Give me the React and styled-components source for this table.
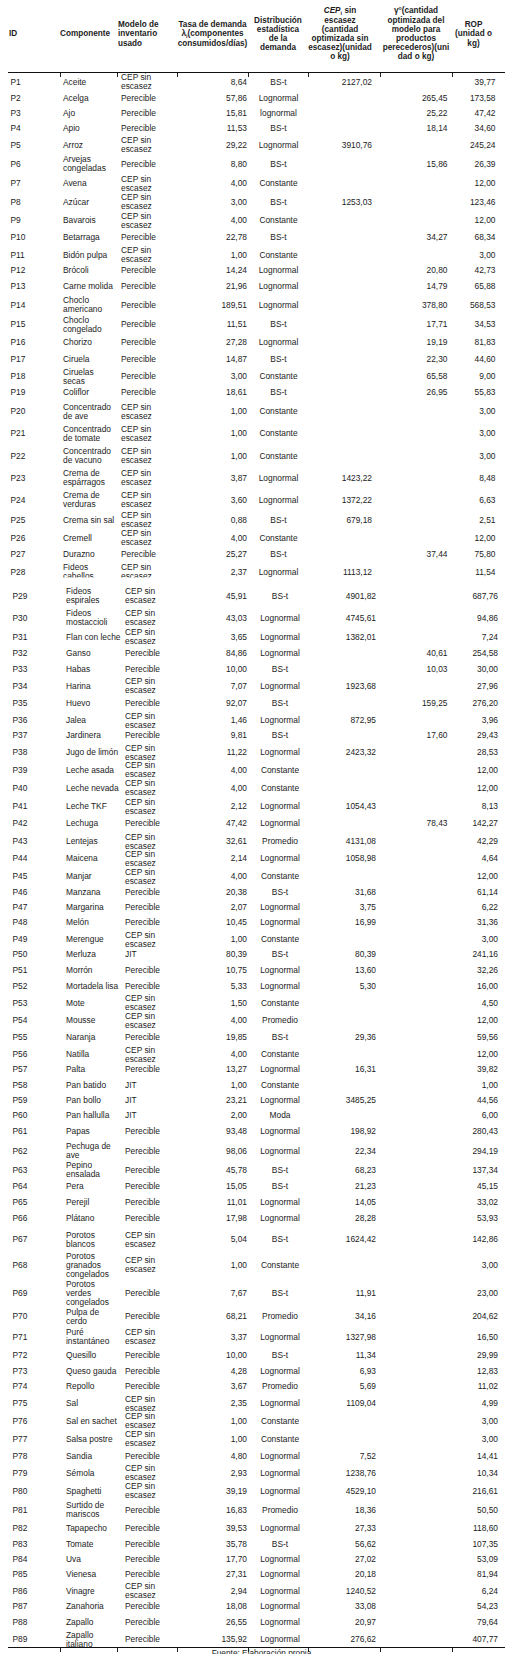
import React from 'react'
import styled, { createGlobalStyle } from 'styled-components'

const GlobalStyle = createGlobalStyle`
  body {
    margin: 0;
    background: #fff;
  }
`

const COLS = '52px 57px 60px 71px 60px 72px 72px 53px'

const Page = styled.div`
  width: 497px;
  padding-left: 8px;
  font-family: 'Liberation Sans', Arial, sans-serif;
  color: #1c1c1c;
`

const Header = styled.div`
  display: grid;
  grid-template-columns: ${COLS};
  align-items: center;
  box-sizing: border-box;
  height: 72px;
  padding-bottom: 4px;
  font-size: 8.2px;
  font-weight: bold;
  line-height: 9.2px;
`

const HeadCell = styled.div`
  text-align: ${p => p.$align || 'center'};
  padding-left: ${p => p.$pl || 0}px;
  padding-right: ${p => p.$pr || 0}px;
`

const Line = styled.span`
  display: block;
  white-space: nowrap;
`

const Sub = styled.sub`
  font-size: 5.5px;
  line-height: 0;
  vertical-align: -1.5px;
`

const Rule = styled.div`
  display: grid;
  grid-template-columns: ${COLS};
  border-top: 1.5px solid #111;
  margin-bottom: ${p => p.$overlap ? -4 : 0}px;
`

const Tick = styled.span`
  height: 4px;
  border-left: ${p => p.$first ? 'none' : '1px solid #222'};
`

const Row = styled.div`
  display: grid;
  grid-template-columns: ${COLS};
  align-items: center;
  height: ${p => p.$h}px;
  font-size: 8.4px;
  line-height: 9px;
  ${p => p.$clip && 'clip-path: inset(0 0 4px 0);'}
`

const PageBreak = styled.div`
  height: ${p => p.$h}px;
`

const IdCell = styled.div`
  padding-left: ${p => p.$p2 ? 4.5 : 2.5}px;
  white-space: nowrap;
`

const NameCell = styled.div`
  padding-left: ${p => p.$p2 ? 6 : 3}px;
`

const ModelCell = styled.div`
  padding-left: ${p => p.$p2 ? 8 : 4}px;
`

const DistCell = styled.div`
  text-align: center;
  white-space: nowrap;
  padding-left: ${p => p.$p2 ? 4 : 1}px;
`

const NumCell = styled.div`
  text-align: right;
  white-space: nowrap;
  padding-right: ${p => p.$pr}px;
`

const Source = styled.div`
  height: 5px;
  margin-top: -3px;
  overflow: hidden;
  padding-left: 10px;
  text-align: center;
  font-size: 8.3px;
  line-height: 9px;
`

const MODELS = { C: 'CEP sin/escasez', P: 'Perecible', J: 'JIT' }

// id;componente;modelo;tasa;distribucion;cep;gamma;rop;y (centro de la fila)
const RAW = `
P1;Aceite;C;8,64;BS-t;2127,02;;39,77;82.3
P2;Acelga;P;57,86;Lognormal;;265,45;173,58;99
P3;Ajo;P;15,81;lognormal;;25,22;47,42;114
P4;Apio;P;11,53;BS-t;;18,14;34,60;129
P5;Arroz;C;29,22;Lognormal;3910,76;;245,24;145
P6;Arvejas/congeladas;P;8,80;BS-t;;15,86;26,39;165
P7;Avena;C;4,00;Constante;;;12,00;184.3
P8;Azúcar;C;3,00;BS-t;1253,03;;123,46;202.7
P9;Bavarois;C;4,00;Constante;;;12,00;221.7
P10;Betarraga;P;22,78;BS-t;;34,27;68,34;238.3
P11;Bidón pulpa;C;1,00;Constante;;;3,00;255
P12;Brócoli;P;14,24;Lognormal;;20,80;42,73;270.7
P13;Carne molida;P;21,96;Lognormal;;14,79;65,88;286
P14;Choclo/americano;P;189,51;Lognormal;;378,80;568,53;305
P15;Choclo/congelado;P;11,51;BS-t;;17,71;34,53;326.7
P16;Chorizo;P;27,28;Lognormal;;19,19;81,83;343.3
P17;Ciruela;P;14,87;BS-t;;22,30;44,60;360
P18;Ciruelas/secas;P;3,00;Constante;;65,58;9,00;376.7
P19;Coliflor;P;18,61;BS-t;;26,95;55,83;393.3
P20;Concentrado/de ave;C;1,00;Constante;;;3,00;410.7
P21;Concentrado/de tomate;C;1,00;Constante;;;3,00;435
P22;Concentrado/de vacuno;C;1,00;Constante;;;3,00;456.7
P23;Crema de/espárragos;C;3,87;Lognormal;1423,22;;8,48;479
P24;Crema de/verduras;C;3,60;Lognormal;1372,22;;6,63;501
P25;Crema sin sal;C;0,88;BS-t;679,18;;2,51;521.7
P26;Cremell;C;4,00;Constante;;;12,00;538.3
P27;Durazno;P;25,27;BS-t;;37,44;75,80;555
P28;Fideos/cabellos;C;2,37;Lognormal;1113,12;;11,54;573.3
P29;Fideos/espirales;C;45,91;BS-t;4901,82;;687,76;597.7
P30;Fideos/mostaccioli;C;43,03;Lognormal;4745,61;;94,86;619.3
P31;Flan con leche;C;3,65;Lognormal;1382,01;;7,24;639
P32;Ganso;P;84,86;Lognormal;;40,61;254,58;655
P33;Habas;P;10,00;BS-t;;10,03;30,00;669.3
P34;Harina;C;7,07;Lognormal;1923,68;;27,96;686.7
P35;Huevo;P;92,07;BS-t;;159,25;276,20;705
P36;Jalea;C;1,46;Lognormal;872,95;;3,96;720
P37;Jardinera;P;9,81;BS-t;;17,60;29,43;736.7
P38;Jugo de limón;C;11,22;Lognormal;2423,32;;28,53;752.7
P39;Leche asada;C;4,00;Constante;;;12,00;771
P40;Leche nevada;C;4,00;Constante;;;12,00;789.3
P41;Leche TKF;C;2,12;Lognormal;1054,43;;8,13;807.3
P42;Lechuga;P;47,42;Lognormal;;78,43;142,27;825
P43;Lentejas;C;32,61;Promedio;4131,08;;42,29;841.7
P44;Maicena;C;2,14;Lognormal;1058,98;;4,64;859
P45;Manjar;C;4,00;Constante;;;12,00;877.7
P46;Manzana;P;20,38;BS-t;31,68;;61,14;893.3
P47;Margarina;P;2,07;Lognormal;3,75;;6,22;909
P48;Melón;P;10,45;Lognormal;16,99;;31,36;923.3
P49;Merengue;C;1,00;Constante;;;3,00;939.3
P50;Merluza;J;80,39;BS-t;80,39;;241,16;956
P51;Morrón;P;10,75;Lognormal;13,60;;32,26;971.7
P52;Mortadela lisa;P;5,33;Lognormal;5,30;;16,00;986.7
P53;Mote;C;1,50;Constante;;;4,50;1003.3
P54;Mousse;C;4,00;Promedio;;;12,00;1021.7
P55;Naranja;P;19,85;BS-t;29,36;;59,56;1038.3
P56;Natilla;C;4,00;Constante;;;12,00;1055
P57;Palta;P;13,27;Lognormal;16,31;;39,82;1070.7
P58;Pan batido;J;1,00;Constante;;;1,00;1086
P59;Pan bollo;J;23,21;Lognormal;3485,25;;44,56;1100.7
P60;Pan hallulla;J;2,00;Moda;;;6,00;1116
P61;Papas;P;93,48;Lognormal;198,92;;280,43;1131
P62;Pechuga de/ave;P;98,06;Lognormal;22,34;;294,19;1153.3
P63;Pepino/ensalada;P;45,78;BS-t;68,23;;137,34;1171
P64;Pera;P;15,05;BS-t;21,23;;45,15;1188.3
P65;Perejil;P;11,01;Lognormal;14,05;;33,02;1203.3
P66;Plátano;P;17,98;Lognormal;28,28;;53,93;1218.3
P67;Porotos/blancos;C;5,04;BS-t;1624,42;;142,86;1239.3
P68;Porotos/granados/congelados;C;1,00;Constante;;;3,00;1265
P69;Porotos/verdes/congelados;P;7,67;BS-t;11,91;;23,00;1296
P70;Pulpa de/cerdo;P;68,21;Promedio;34,16;;204,62;1317.7
P71;Puré/instantáneo;C;3,37;Lognormal;1327,98;;16,50;1339.3
P72;Quesillo;P;10,00;BS-t;11,34;;29,99;1357.3
P73;Queso gauda;P;4,28;Lognormal;6,93;;12,83;1372.3
P74;Repollo;P;3,67;Promedio;5,69;;11,02;1387.3
P75;Sal;C;2,35;Lognormal;1109,04;;4,99;1404
P76;Sal en sachet;C;1,00;Constante;;;3,00;1422.3
P77;Salsa postre;C;1,00;Constante;;;3,00;1440
P78;Sandia;P;4,80;Lognormal;7,52;;14,41;1457.3
P79;Sémola;C;2,93;Lognormal;1238,76;;10,34;1473.3
P80;Spaghetti;C;39,19;Lognormal;4529,10;;216,61;1491.7
P81;Surtido de/mariscos;P;16,83;Promedio;18,36;;50,50;1511.7
P82;Tapapecho;P;39,53;Lognormal;27,33;;118,60;1530
P83;Tomate;P;35,78;BS-t;56,62;;107,35;1545
P84;Uva;P;17,70;Lognormal;27,02;;53,09;1560
P85;Vienesa;P;27,31;Lognormal;20,18;;81,94;1575
P86;Vinagre;C;2,94;Lognormal;1240,52;;6,24;1591
P87;Zanahoria;P;18,08;Lognormal;33,08;;54,23;1608.3
P88;Zapallo;P;26,55;Lognormal;20,97;;79,64;1623.3
P89;Zapallo/italiano;P;135,92;Lognormal;276,62;;407,77;1640
`

const rows = RAW.trim().split('\n').map(line => {
  const [id, name, model, rate, dist, cep, gamma, rop, y] = line.split(';')
  return { id, name, model: MODELS[model], rate, dist, cep, gamma, rop, y: parseFloat(y) }
})

const START = 73.5
const END = 1648
rows.forEach((r, i) => {
  const top = i === 0 ? START : (rows[i - 1].y + r.y) / 2
  const bottom = i === rows.length - 1 ? END : (r.y + rows[i + 1].y) / 2
  r.h = bottom - top
})

// la tabla viene de dos paginas, P28 queda cortada al final de la primera
const BREAK_AT = 'P28'

function Lines({ text }) {
  return text.split('/').map((t, i) => <Line key={i}>{t}</Line>)
}

function Ticks() {
  return [0, 1, 2, 3, 4, 5, 6, 7].map(i => <Tick key={i} $first={i === 0} />)
}

function DataRow({ r, p2 }) {
  const clip = r.id === BREAK_AT
  return (
    <>
      <Row $h={clip ? 18 : r.h} $clip={clip}>
        <IdCell $p2={p2}>{r.id}</IdCell>
        <NameCell $p2={p2}><Lines text={r.name} /></NameCell>
        <ModelCell $p2={p2}><Lines text={r.model} /></ModelCell>
        <NumCell $pr={1}>{r.rate}</NumCell>
        <DistCell $p2={p2}>{r.dist}</DistCell>
        <NumCell $pr={p2 ? 4 : 8}>{r.cep}</NumCell>
        <NumCell $pr={4.5}>{r.gamma}</NumCell>
        <NumCell $pr={p2 ? 7 : 9.5}>{r.rop}</NumCell>
      </Row>
      {clip && <PageBreak $h={r.h - 18} />}
    </>
  )
}

function App() {
  const breakIndex = rows.findIndex(r => r.id === BREAK_AT)
  return (
    <Page>
      <GlobalStyle />
      <Header>
        <HeadCell $align="left" $pl={1}>ID</HeadCell>
        <HeadCell $align="left">Componente</HeadCell>
        <HeadCell $align="left" $pl={1}><Lines text="Modelo de/inventario/usado" /></HeadCell>
        <HeadCell>
          <Line>Tasa de demanda</Line>
          <Line>λ<Sub>i</Sub>(componentes</Line>
          <Line>consumidos/días)</Line>
        </HeadCell>
        <HeadCell><Lines text="Distribución/estadística/de la/demanda" /></HeadCell>
        <HeadCell $pr={8}>
          <Line><i>CEP</i><Sub>i</Sub> sin</Line>
          <Lines text="escasez/(cantidad/optimizada sin" />
          <Line>escasez)(unidad</Line>
          <Line>o kg)</Line>
        </HeadCell>
        <HeadCell>
          <Line>γ°(cantidad</Line>
          <Lines text="optimizada del/modelo para/productos" />
          <Line>perecederos)(uni</Line>
          <Line>dad o kg)</Line>
        </HeadCell>
        <HeadCell $pr={10}>
          <Line>ROP</Line>
          <Line>(unidad o</Line>
          <Line>kg)</Line>
        </HeadCell>
      </Header>
      <Rule $overlap><Ticks /></Rule>
      {rows.map((r, i) => <DataRow key={r.id} r={r} p2={i > breakIndex} />)}
      <Rule><Ticks /></Rule>
      <Source>Fuente: Elaboración propia</Source>
    </Page>
  )
}

export default App
